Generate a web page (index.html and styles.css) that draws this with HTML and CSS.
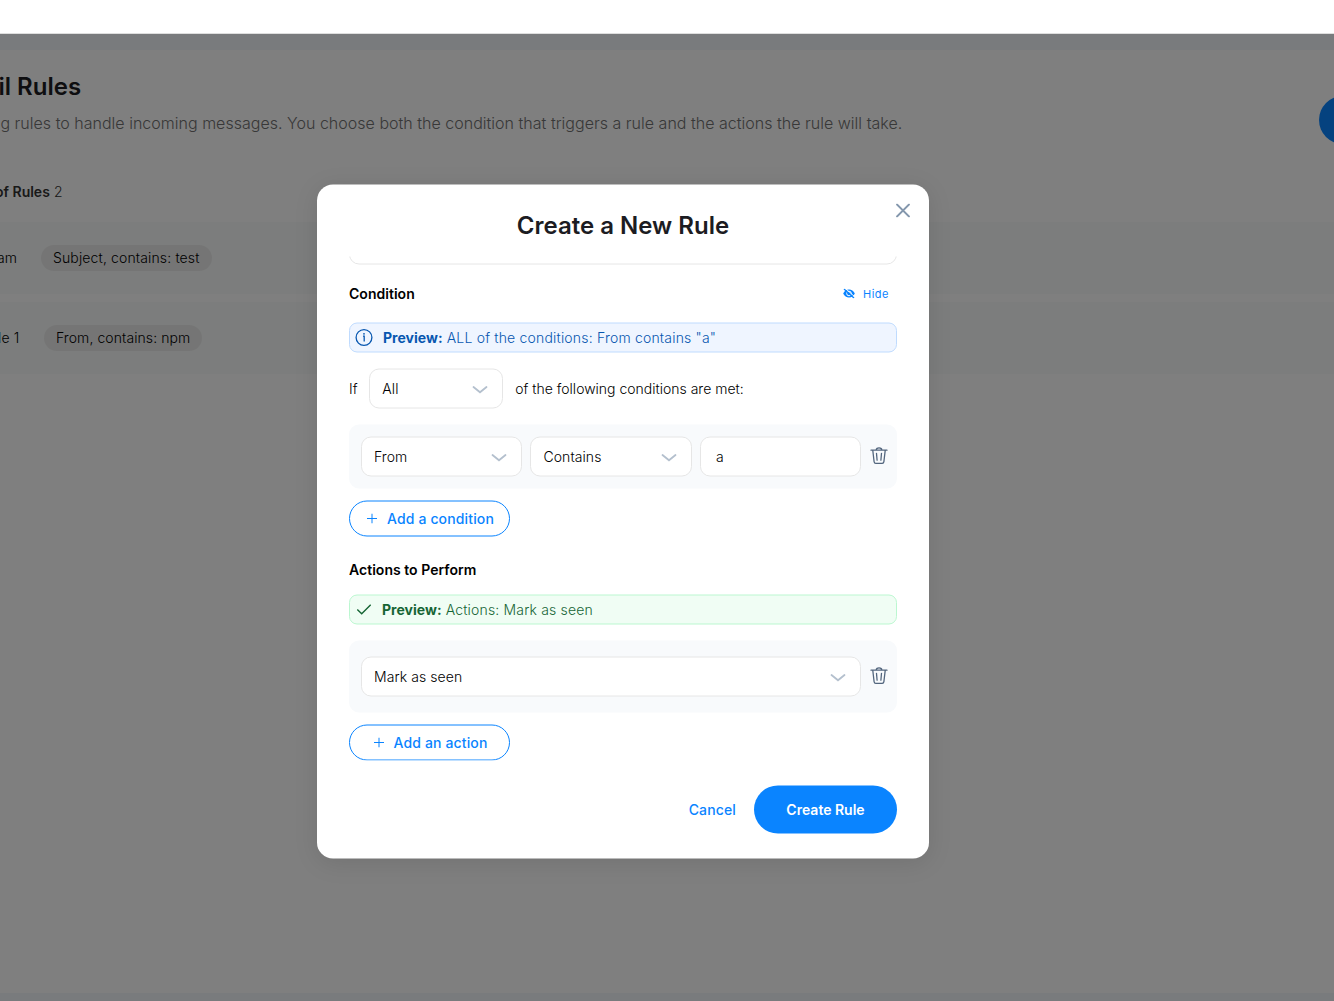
FILE: index.html
```
<!DOCTYPE html>
<html lang="en">
<head>
  <meta charset="UTF-8">
  <title>Email Rules</title>
  <meta name="viewport" content="width=device-width, initial-scale=1.0" />
  <link rel="stylesheet" href="styles.css">
</head>
<body>

<div class="topbar"></div>

<main class="page">
  <section class="rules-card">
    <div class="rules-header">
      <div>
        <h1>il Rules</h1>
        <p class="subtitle">ng rules to handle incoming messages. You choose both the condition that triggers a rule and the actions the rule will take.</p>
      </div>
      <span class="new-rule"></span>
    </div>
    <p class="rules-count"><strong>of Rules</strong> 2</p>
    <div class="rule">
      <span class="rule-name">am</span>
      <span class="chip chip-subject">Subject, contains: test</span>
    </div>
    <div class="rule">
      <span class="rule-name rule-name-wide">le 1</span>
      <span class="chip chip-from">From, contains: npm</span>
    </div>
  </section>

  <!-- Create rule dialog -->
  <div class="overlay">
    <div class="modal">
      <button class="close" aria-label="Close">
        <svg width="14" height="14" viewBox="0 0 14 14"><path d="M1 1l12 12M13 1L1 13" /></svg>
      </button>
      <h2>Create a New Rule</h2>

      <div class="modal-body">
        <div class="name-input"></div>

        <div class="section-title condition-title">
          <h3>Condition</h3>
          <button class="hide-btn">
            <svg width="12" height="10" viewBox="0 0 12 10">
              <path class="eye" d="M0.2 5C1.5 2.2 3.5 0.9 6 0.9S10.500 2.200 11.800 5C10.500 7.800 8.500 9.100 6 9.100S1.500 7.800 0.200 5Z" />
              <circle class="iris" cx="6" cy="5" r="2.300" />
              <path class="slash-gap" d="M2 -0.400L12 8.600" />
              <path class="slash" d="M1 0.500L11 9.500" />
            </svg>
            Hide
          </button>
        </div>

        <div class="preview preview-info">
          <svg width="18" height="18" viewBox="0 0 18 18"><circle cx="9" cy="9" r="7.900" /><path d="M8 7.600H9.200V13" /><circle class="dot" cx="9" cy="5.300" r="0.900" /></svg>
          <span><strong>Preview:</strong> ALL of the conditions: From contains "a"</span>
        </div>

        <div class="match-row">
          <span>If</span>
          <div class="select select-small">All
            <svg width="16" height="9" viewBox="0 0 16 9"><path d="M1.500 1.500L8 6.800L14.500 1.500" /></svg>
          </div>
          <span class="match-text">of the following conditions are met:</span>
        </div>

        <div class="group">
          <div class="select">From
            <svg width="16" height="9" viewBox="0 0 16 9"><path d="M1.500 1.500L8 6.800L14.500 1.500" /></svg>
          </div>
          <div class="select">Contains
            <svg width="16" height="9" viewBox="0 0 16 9"><path d="M1.500 1.500L8 6.800L14.500 1.500" /></svg>
          </div>
          <div class="select value">a</div>
          <button class="trash" aria-label="Delete condition">
            <svg width="18" height="18" viewBox="0 0 18 18"><path d="M1 3.700H17M6.200 3.500C6.200 0.600 11.800 0.600 11.800 3.500M2.800 4L4.100 15.200Q4.300 16.800 5.800 16.800H12.200Q13.700 16.800 13.900 15.200L15.200 4M6.500 6.800L7.100 13.700M11.500 6.800L10.900 13.700" /></svg>
          </button>
        </div>

        <button class="add-btn">
          <svg width="10" height="10" viewBox="0 0 10 10"><path d="M5 0V10M0 5H10" /></svg>
          Add a condition
        </button>

        <div class="section-title actions-title">
          <h3>Actions to Perform</h3>
        </div>

        <div class="preview preview-success">
          <svg width="16" height="12" viewBox="0 0 16 12"><path d="M1.300 6L5.700 10.300L14.700 1.200" /></svg>
          <span><strong>Preview:</strong> Actions: Mark as seen</span>
        </div>

        <div class="group group-action">
          <div class="select">Mark as seen
            <svg width="16" height="9" viewBox="0 0 16 9"><path d="M1.500 1.500L8 6.800L14.500 1.500" /></svg>
          </div>
          <button class="trash" aria-label="Delete action">
            <svg width="18" height="18" viewBox="0 0 18 18"><path d="M1 3.700H17M6.200 3.500C6.200 0.600 11.800 0.600 11.800 3.500M2.800 4L4.100 15.200Q4.300 16.800 5.800 16.800H12.200Q13.700 16.800 13.900 15.200L15.200 4M6.500 6.800L7.100 13.700M11.500 6.800L10.900 13.700" /></svg>
          </button>
        </div>

        <button class="add-btn">
          <svg width="10" height="10" viewBox="0 0 10 10"><path d="M5 0V10M0 5H10" /></svg>
          Add an action
        </button>
      </div>

      <div class="modal-footer">
        <button class="cancel">Cancel</button>
        <button class="create">Create Rule</button>
      </div>
    </div>
  </div>
</main>

</body>
</html>
```
FILE: styles.css
```
/* ============================
   Base Styling
============================ */
* {
  box-sizing: border-box;
}

body {
  margin: 0;
  height: 1001px;
  overflow: hidden;
  font-family: Inter, "Liberation Sans", sans-serif;
  font-size: 14px;
  font-weight: 300;
  line-height: 20px;
  letter-spacing: 0.14px;
  color: #000;
  background: #fff;
}

h1, h2, h3, p {
  margin: 0;
}

button {
  padding: 0;
  border: none;
  background: none;
  font: inherit;
  letter-spacing: inherit;
  cursor: pointer;
}

svg {
  fill: none;
  stroke: currentColor;
  flex: none;
}

.topbar {
  height: 34px;
  border-bottom: 1px solid #dedede;
  background: #fff;
}

/* ============================
   Rules Page
============================ */
.page {
  position: relative;
  height: 967px;
  padding-top: 16px;
  background: #f3f6fb;
  overflow: hidden;
}

.rules-card {
  height: 943px;
  padding-top: 20px;
  background: #fff;
  white-space: nowrap;
}

.rules-header {
  display: flex;
  justify-content: space-between;
  height: 108px;
}

h1 {
  font-size: 24px;
  font-weight: 600;
  line-height: 34px;
  letter-spacing: 0;
  margin-left: -1.5px;
  color: #1c1c22;
}

.subtitle {
  margin: 7px 0 0 -9px;
  font-size: 16px;
  line-height: 24px;
  letter-spacing: 0.015px;
  color: #707070;
}

.new-rule {
  width: 48px;
  height: 48px;
  margin: 26px -33px 0 0;
  border-radius: 24px;
  background: #0a84ff;
}

.rules-count {
  margin: 4px 0 20px -5px;
  color: #333;
}

.rules-count strong {
  font-weight: 600;
  letter-spacing: 0;
}

.rule {
  display: flex;
  align-items: center;
  height: 72px;
  margin-bottom: 8px;
  background: #f8fbfa;
}

.rule-name {
  width: 44px;
  margin-left: -3px;
}

.rule-name-wide {
  width: 46px;
  margin-left: -2px;
}

.chip {
  height: 26px;
  padding: 0 12px;
  border-radius: 13px;
  line-height: 26px;
  background: #ebebeb;
}

.chip-from {
  letter-spacing: 0.08px;
}

/* ============================
   Modal
============================ */
.overlay {
  position: absolute;
  inset: 0;
  padding: 151px 0 0 317px;
  background: rgba(0, 0, 0, 0.5);
}

.modal {
  position: relative;
  width: 612px;
  height: 674px;
  padding: 24px 32px 25px;
  border-radius: 16px;
  background: #fff;
  box-shadow: 0 4px 24px rgba(0, 0, 0, 0.1);
  transform: translateY(-0.5px);
}

.close {
  position: absolute;
  top: 19px;
  right: 19px;
  width: 14px;
  height: 14px;
  line-height: 0;
  color: #8497ad;
  stroke-width: 1.8;
  stroke-linecap: round;
}

h2 {
  font-size: 24px;
  font-weight: 600;
  line-height: 34px;
  letter-spacing: 0;
  text-align: center;
  color: #1c1c22;
}

.modal-body {
  height: 504px;
  margin-top: 14px;
  overflow: hidden;
}

.name-input {
  height: 40px;
  margin-top: -32px;
  border: 1px solid #e6e6e6;
  border-radius: 10px;
}

.section-title {
  display: flex;
  align-items: center;
  justify-content: space-between;
  height: 20px;
}

.condition-title {
  margin: 19px 0;
}

.actions-title {
  margin: 23px 0 15px;
}

h3 {
  font-size: 14px;
  font-weight: 600;
  letter-spacing: 0.03px;
}

.hide-btn {
  display: flex;
  align-items: center;
  gap: 8px;
  margin-right: 8px;
  font-size: 11px;
  font-weight: 400;
  letter-spacing: 0.5px;
  color: #0a84ff;
}

.eye {
  fill: currentColor;
  stroke: none;
}

.iris {
  stroke: #fff;
}

.slash-gap {
  stroke: #fff;
  stroke-width: 1;
}

.slash {
  stroke-width: 1.3;
}

.preview {
  display: flex;
  align-items: center;
  height: 30px;
  margin-bottom: 16px;
  padding-left: 6px;
  border: 1px solid;
  border-radius: 8px;
}

.preview strong {
  font-weight: 700;
  letter-spacing: 0.02px;
}

.preview-info {
  gap: 10px;
  padding-left: 5px;
  letter-spacing: 0.19px;
  color: #0757b0;
  background: #eff5ff;
  border-color: #bfdbfe;
  stroke-width: 1.3;
}

.preview-info .dot {
  fill: currentColor;
  stroke: none;
}

.preview-success {
  gap: 10px;
  letter-spacing: 0.17px;
  color: #166534;
  background: #f0fdf4;
  border-color: #bbf7d0;
  stroke-width: 1.4;
}

.match-row {
  display: flex;
  align-items: center;
  gap: 12px;
  margin-bottom: 16px;
}

.match-text {
  letter-spacing: 0;
}

.select {
  display: flex;
  flex: 1;
  align-items: center;
  justify-content: space-between;
  height: 40px;
  padding: 0 14px 0 12px;
  border: 1px solid #e6e6e6;
  border-radius: 10px;
  background: #fff;
  letter-spacing: 0.08px;
}

.select svg {
  margin-top: 2px;
  color: #b4c0ce;
  stroke-width: 1.8;
  stroke-linecap: round;
}

.select-small {
  flex: none;
  width: 134px;
  margin-left: -0.5px;
}

.value {
  padding: 0 11px 0 15px;
}

.group {
  display: flex;
  align-items: center;
  gap: 8.3px;
  height: 64px;
  margin-bottom: 12px;
  padding: 0 9px 0 12px;
  border-radius: 10px;
  background: #f8fafc;
}

.group-action {
  height: 72px;
}

.trash {
  width: 18px;
  height: 18px;
  margin: -2px 0 0 0.7px;
  line-height: 0;
  color: #52657d;
  stroke-width: 1.3;
  stroke-linecap: round;
}

.add-btn {
  display: flex;
  align-items: center;
  justify-content: center;
  gap: 10px;
  width: 161px;
  height: 36px;
  padding-left: 2px;
  border: 1px solid #0a84ff;
  border-radius: 18px;
  font-weight: 500;
  color: #0a84ff;
}

.modal-footer {
  display: flex;
  justify-content: flex-end;
  align-items: center;
  gap: 18px;
  margin-top: 25px;
}

.cancel {
  font-weight: 500;
  color: #0a84ff;
}

.create {
  width: 143px;
  height: 48px;
  border-radius: 24px;
  font-weight: 600;
  letter-spacing: 0;
  color: #fff;
  background: #0a84ff;
}
```
